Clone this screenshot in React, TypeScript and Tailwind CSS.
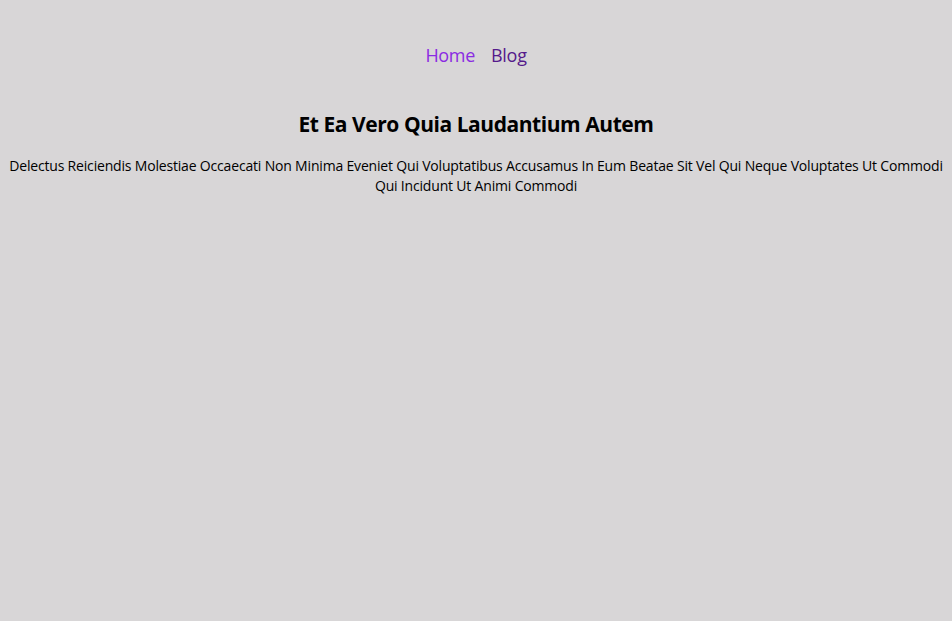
export default function App() {
  return (
    <div className="min-h-screen bg-[#d8d6d7] text-black" style={{ fontFamily: '"Open Sans", "Noto Sans", sans-serif' }}>
      <nav className="flex justify-center gap-[16px] pt-[42px] text-[18px] leading-[26px] tracking-[-0.3px]">
        <a href="#" className="text-[#8a2be2]">Home</a>
        <a href="#" className="text-[#551a8b]">Blog</a>
      </nav>
      <main className="mt-[41px] text-center">
        <h2 className="text-[21px] font-bold leading-[30px] tracking-[-0.45px]">Et Ea Vero Quia Laudantium Autem</h2>
        <p className="mt-[17px] px-[4px] text-[14px] leading-[20px] tracking-[-0.18px]">
          Delectus Reiciendis Molestiae Occaecati Non Minima Eveniet Qui Voluptatibus Accusamus In Eum Beatae Sit Vel Qui Neque Voluptates Ut Commodi Qui Incidunt Ut Animi Commodi
        </p>
      </main>
    </div>
  );
}
